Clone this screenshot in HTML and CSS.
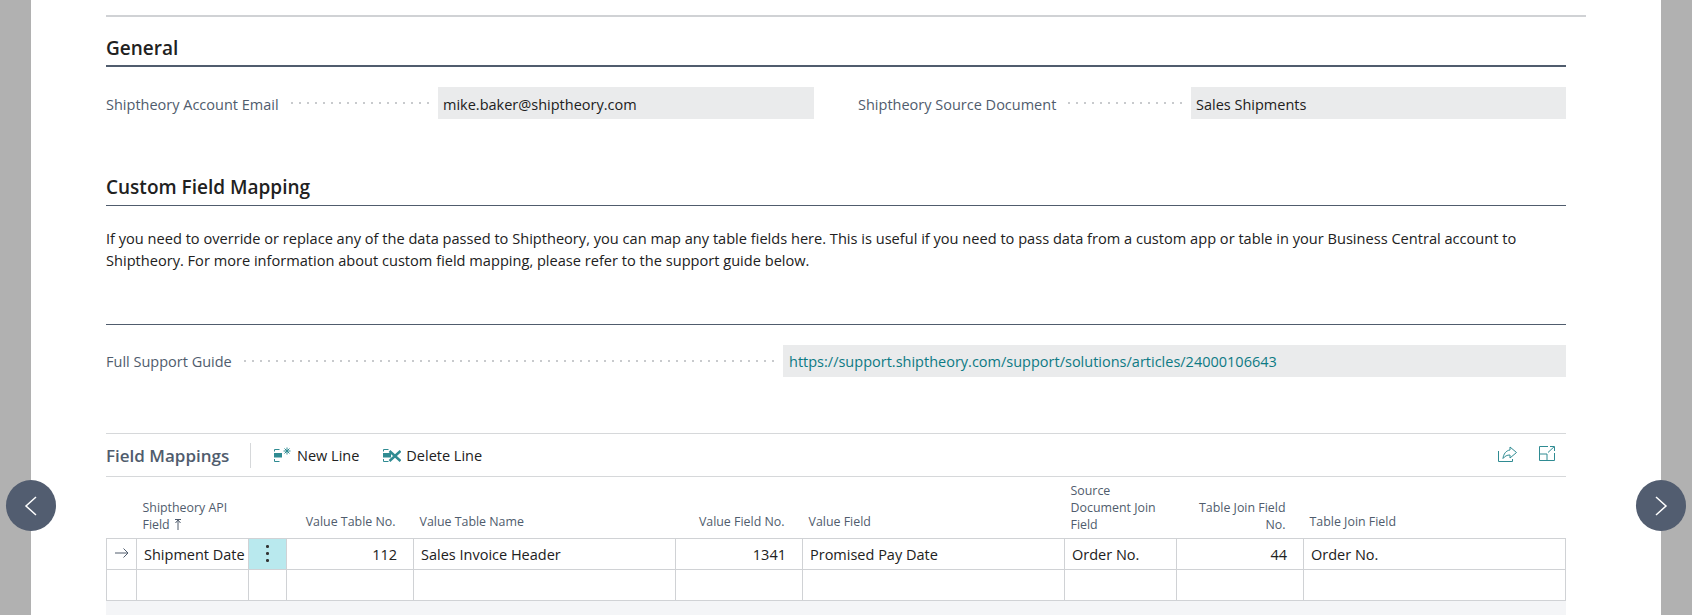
FILE: index.html
```html
<!DOCTYPE html>
<html lang="en">
<head>
  <meta charset="UTF-8" />
  <title>Shiptheory Setup</title>
  <meta name="viewport" content="width=device-width, initial-scale=1.0" />
  <link rel="stylesheet" href="styles.css">
</head>
<body>
  <div class="sheet">
    <div class="top-rule"></div>

    <h2 class="section-title general-title">General</h2>
    <div class="field-columns">
      <div class="field">
        <span class="field-label">Shiptheory Account Email</span>
        <span class="field-dots"></span>
        <span class="field-value">mike.baker@shiptheory.com</span>
      </div>
      <div class="field field-right">
        <span class="field-label">Shiptheory Source Document</span>
        <span class="field-dots"></span>
        <span class="field-value">Sales Shipments</span>
      </div>
    </div>

    <h2 class="section-title mapping-title">Custom Field Mapping</h2>
    <p class="intro">If you need to override or replace any of the data passed to Shiptheory, you can map any table fields here. This is useful if you need to pass data from a custom app or table in your Business Central account to Shiptheory. For more information about custom field mapping, please refer to the support guide below.</p>

    <div class="guide">
      <div class="field field-wide">
        <span class="field-label">Full Support Guide</span>
        <span class="field-dots"></span>
        <span class="field-value field-link">https://support.shiptheory.com/support/solutions/articles/24000106643</span>
      </div>
    </div>

    <div class="part">
      <div class="toolbar">
        <span class="part-title">Field Mappings</span>
        <span class="toolbar-divider"></span>
        <button class="tool">
          <svg class="tool-icon" viewBox="0 0 18 16" width="18" height="16">
            <path class="icon-line" d="M.5 4.500v-2h5M.5 12v2.500h5" />
            <rect class="icon-fill" x="0" y="6" width="8" height="4.500" />
            <path class="icon-line" d="M13 .5v7M9.500 4h7M10.500 1.500l5 5M15.500 1.500l-5 5" />
          </svg>
          New Line
        </button>
        <button class="tool">
          <svg class="tool-icon" viewBox="0 0 18 16" width="18" height="16">
            <path class="icon-line" d="M.5 4.500v-2h5M.5 12v2.500h5" />
            <rect class="icon-fill" x="0" y="6" width="8" height="4.500" />
            <path class="icon-cross" d="M6.500 4l11 10M17.500 4l-11 10" />
          </svg>
          Delete Line
        </button>
        <span class="toolbar-right">
          <svg class="side-icon" viewBox="0 0 19 16" width="19" height="16">
            <path class="icon-line" d="M.5 5v10.500h14V13" />
            <path class="icon-line" d="M12 1l6.500 5.500L12 12V9C9 9 7 10 5 12.500 5.500 8 8 4.500 12 4z" />
          </svg>
          <svg class="side-icon" viewBox="0 0 16 15" width="16" height="15">
            <path class="icon-line" d="M9 .5H.5v14h15V7M.5 8H8v6.500M9 6.500L15 .8M11 .5h4.500V5" />
          </svg>
        </span>
      </div>

      <table class="grid">
        <colgroup>
          <col class="c-arrow"><col class="c-api"><col class="c-menu"><col class="c-num"><col class="c-name">
          <col class="c-num"><col class="c-name"><col class="c-api"><col class="c-num"><col class="c-name">
        </colgroup>
        <thead>
          <tr>
            <th></th>
            <th colspan="2" class="wrapped">
              <span class="api-head">Shiptheory API Field
                <svg class="sort-arrow" viewBox="0 0 8 11" width="8" height="11"><path d="M1 .5h6M4 1v10M1.500 4L4 1l2.500 3" /></svg>
              </span>
            </th>
            <th class="num">Value Table No.</th>
            <th>Value Table Name</th>
            <th class="num">Value Field No.</th>
            <th>Value Field</th>
            <th class="wrapped">Source Document Join Field</th>
            <th class="num wrapped">Table Join Field No.</th>
            <th>Table Join Field</th>
          </tr>
        </thead>
        <tbody>
          <tr>
            <td class="arrow-cell">
              <svg viewBox="0 0 14 12" width="14" height="12"><path class="row-arrow" d="M0 6h13M8.500 1.500L13 6l-4.500 4.500" /></svg>
            </td>
            <td>Shipment Date</td>
            <td class="menu-cell">
              <span class="menu-dots"><i></i><i></i><i></i></span>
            </td>
            <td class="num">112</td>
            <td>Sales Invoice Header</td>
            <td class="num">1341</td>
            <td>Promised Pay Date</td>
            <td>Order No.</td>
            <td class="num">44</td>
            <td>Order No.</td>
          </tr>
          <tr>
            <td></td><td></td><td></td><td></td><td></td><td></td><td></td><td></td><td></td><td></td>
          </tr>
        </tbody>
      </table>
      <div class="grid-foot"></div>
    </div>
  </div>

  <button class="nav nav-prev">
    <svg viewBox="0 0 14 24" width="14" height="24"><path d="M12 3l-10 9 10 9" /></svg>
  </button>
  <button class="nav nav-next">
    <svg viewBox="0 0 14 24" width="14" height="24"><path d="M2 3l10 9-10 9" /></svg>
  </button>
</body>
</html>
```

FILE: styles.css
```css
* {
  margin: 0;
  padding: 0;
  box-sizing: border-box;
}
html, body {
  height: 615px;
  overflow: hidden;
}
body {
  background: #b1b1b1;
  color: #212121;
  font-family: 'Open Sans', sans-serif;
  font-size: 14.5px;
  position: relative;
}
.sheet {
  margin: 0 31px;
  width: 1630px;
  height: 615px;
  background: #fff;
  padding: 15px 95px 0 75px;
  overflow: hidden;
}
.top-rule {
  height: 2px;
  background: #d0d2d5;
  width: 1480px;
}
.section-title {
  font-size: 19px;
  font-weight: 600;
  line-height: 26px;
  color: #212121;
  border-bottom: 1px solid #505c6d;
}
.general-title {
  margin-top: 16px;
  padding-top: 2px;
  height: 34px;
  border-bottom-width: 2px;
}
.field-columns {
  display: grid;
  grid-template-columns: 708px 708px;
  gap: 44px;
  margin-top: 20px;
}
.field {
  display: flex;
  align-items: center;
  height: 32px;
}
.field-label {
  color: #505c6d;
  white-space: nowrap;
}
.field-columns .field-label {
  padding-top: 2px;
}
.field-dots {
  flex: 1;
  height: 2px;
  margin: 0 8px 0 9px;
  background-image: radial-gradient(circle, #c8cacd 1px, transparent 1px);
  background-size: 8px 2px;
}
.field-value {
  width: 376px;
  height: 32px;
  line-height: 36px;
  padding-left: 5px;
  background: #eaebec;
  color: #212121;
}
.field-right .field-value {
  width: 375px;
}
.mapping-title {
  margin-top: 55px;
  height: 32px;
}
.intro {
  margin-top: 21px;
  font-size: 14.6px;
  line-height: 22px;
  color: #212121;
}
.guide {
  margin-top: 53px;
  border-top: 1px solid #505c6d;
  padding-top: 20px;
}
.field-wide .field-value {
  width: 783px;
  line-height: 33px;
  padding-left: 6px;
}
.field-link {
  color: #0d7a84;
}
.part {
  margin-top: 56px;
  border-top: 1px solid #d6d8da;
}
.toolbar {
  display: flex;
  align-items: center;
  height: 43px;
  border-bottom: 1px solid #d6d8da;
}
.part-title {
  font-size: 17px;
  font-weight: 600;
  color: #505c6d;
  width: 144px;
}
.toolbar-divider {
  width: 1px;
  height: 25px;
  background: #d6d8da;
  margin-right: 23px;
}
.tool {
  display: flex;
  align-items: center;
  gap: 5px;
  background: none;
  border: none;
  font: inherit;
  color: #212121;
  margin-right: 24px;
}
.icon-line {
  fill: none;
  stroke: #2f8b92;
  stroke-width: 1;
}
.icon-fill {
  fill: #2f8b92;
}
.icon-cross {
  fill: none;
  stroke: #2f8b92;
  stroke-width: 2.5;
}
.toolbar-right {
  margin-left: auto;
  display: flex;
  align-items: center;
  gap: 22px;
  padding-right: 11px;
  margin-bottom: 3px;
}
.grid {
  width: 1460px;
  border-collapse: collapse;
  table-layout: fixed;
}
.c-arrow { width: 30px; }
.c-api { width: 112px; }
.c-menu { width: 38px; }
.c-num { width: 127px; }
.c-name { width: 262px; }
.grid th {
  height: 61px;
  padding: 0 6px 8px 6px;
  vertical-align: bottom;
  text-align: left;
  font-weight: 400;
  font-size: 12.4px;
  line-height: 17px;
  color: #505c6d;
  border-bottom: 1px solid #d0d2d5;
}
.grid th.num {
  text-align: right;
  padding-right: 18px;
}
.grid th.wrapped {
  padding-bottom: 5px;
}
.api-head {
  display: block;
  width: 100px;
}
.sort-arrow {
  vertical-align: -1px;
  margin-left: 1px;
}
.sort-arrow path {
  fill: none;
  stroke: #505c6d;
  stroke-width: 1;
}
.grid td {
  height: 31px;
  padding: 2px 7px 0;
  border: 1px solid #d0d2d5;
  white-space: nowrap;
  overflow: hidden;
}
.grid td.num {
  text-align: right;
  padding-right: 16px;
}
.grid .arrow-cell {
  text-align: center;
  padding-top: 0;
}
.row-arrow {
  fill: none;
  stroke: #505c6d;
  stroke-width: 1;
}
.grid .menu-cell {
  background: #b9e9ee;
  text-align: center;
  padding-top: 0;
}
.menu-dots {
  display: flex;
  flex-direction: column;
  align-items: center;
  gap: 4.500px;
}
.menu-dots i {
  width: 2.500px;
  height: 2.500px;
  border-radius: 50%;
  background: #333;
}
.grid-foot {
  height: 20px;
  background: #f4f5f7;
}
.nav {
  position: absolute;
  top: 480px;
  width: 50px;
  height: 51px;
  border: none;
  border-radius: 50%;
  background: #525d70;
  display: flex;
  align-items: center;
  justify-content: center;
}
.nav svg path {
  fill: none;
  stroke: #fff;
  stroke-width: 1.500;
}
.nav-prev { left: 6px; }
.nav-next { left: 1636px; }
```
